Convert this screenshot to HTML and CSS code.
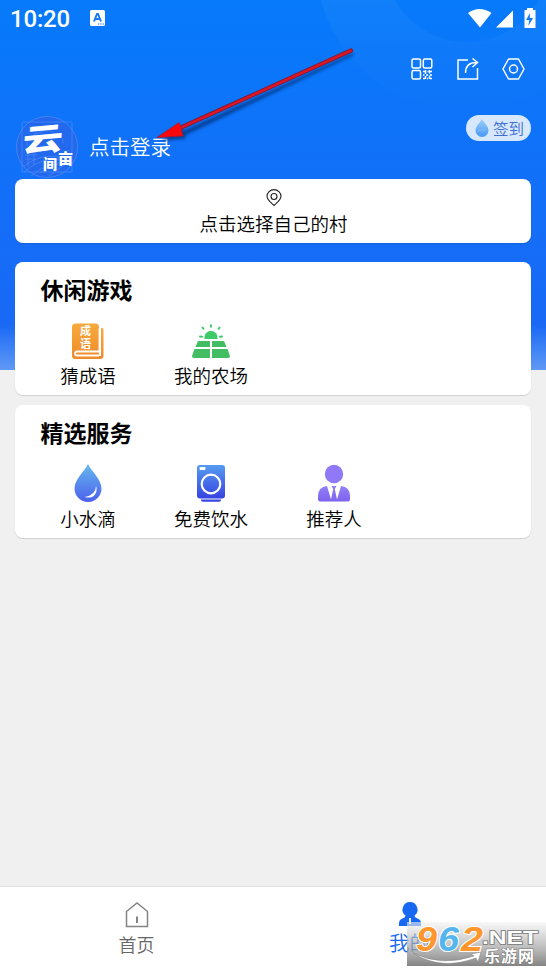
FILE: index.html
```html
<!DOCTYPE html>
<html lang="zh-CN">
<head>
<meta charset="utf-8">
<title>我的</title>
<link rel="stylesheet" href="styles.css">
</head>
<body>
<div class="app">
  <svg class="backdrop" width="546" height="370" viewBox="0 0 546 370">
    <defs><linearGradient id="ring" x1="0" y1="0" x2="0" y2="1"><stop offset=".45" stop-color="#fff" stop-opacity=".065"/><stop offset="1" stop-color="#fff" stop-opacity="0"/></linearGradient></defs>
    <path fill="url(#ring)" fill-rule="evenodd" d="M315-41a152 152 0 1 0 304 0a152 152 0 1 0-304 0zM384-41a83 83 0 1 0 166 0a83 83 0 1 0-166 0z"/>
  </svg>

  <header class="status">
    <span class="clock">10:20</span>
    <svg class="keyboard" width="15" height="17" viewBox="0 0 15 17"><rect width="15" height="16" rx="1.500" fill="#fff"/><path d="M4 11.500 7 4h1l3 7.500M5.200 9h4.600" fill="none" stroke="#1679f6" stroke-width="1.900"/><path d="M8 14h1.300m1 0h1.300m1 0H14" stroke="#1679f6" stroke-width="1.200"/></svg>
    <svg class="signals" width="70" height="21" viewBox="0 0 70 21" fill="#fff">
      <path d="M0 5Q11.500-3 23.500 5L12 19.500z"/><path d="M28 19.500 45 2.500v17z"/><path fill-rule="evenodd" d="M59 0h6v2h2.500v18h-11V2H59zM62 5l-4 7h3.300l-1 6 4.800-8h-3.300z"/>
    </svg>
  </header>

  <nav class="tools">
    <svg width="22" height="22" viewBox="0 0 22 22" fill="none" stroke="#fff" stroke-width="1.500"><rect x="1" y="1" width="8.500" height="9" rx="1.500"/><rect x="12.300" y="1" width="8.500" height="9" rx="1.500"/><rect x="1" y="12.500" width="8.500" height="8.500" rx="1.500"/><path d="M12 13.500h3m1.500 0h1m1.500 0h2M12 17h1.500m1.500 0h2m2 0h2M12 20.500h2m2 0h1m2 0h2M14.500 12v4m0 2v3M18.500 12v3.500m0 2V21"/></svg>
    <svg width="22" height="22" viewBox="0 0 22 22" fill="none" stroke="#fff" stroke-width="1.500"><path d="M11 2H1v19h19.500V10M8.500 15C8.500 8 12 4.500 19.500 4.500M15.500.5l5 4-5 4.500"/></svg>
    <svg width="23" height="22" viewBox="0 0 23 22" fill="none" stroke="#fff" stroke-width="1.500"><path d="M6.500 1h10L22 11l-5.500 10h-10L1 11z" stroke-linejoin="round"/><circle cx="11.500" cy="11" r="4"/></svg>
  </nav>

  <section class="profile">
    <svg class="avatar" width="62" height="62" viewBox="0 0 62 62">
      <circle cx="31" cy="31" r="30.500" fill="#2269ed" stroke="#4383f5"/>
      <g fill="none" stroke="#4f8af6" stroke-width=".7"><path d="M6 6h50v50H6zM11 30q-1-6 5-7 1-7 8-6 7-7 14 1 9-1 9 9M7 51q20-17 48-7M8 56q22-19 47-9M15 60q18-16 38-11M24 57 53 34M33 60 56 43M9 39h12M9 43h11M12 36v15M18 36v13"/></g>
      <g class="avatar-text"><text transform="translate(6 36.500) rotate(-5) skewX(-9) scale(1.120 .86)" font-size="36">云</text><text x="27" y="53" font-size="14">间</text><text x="42" y="47.500" font-size="15">亩</text></g>
    </svg>
    <span class="login">点击登录</span>
    <span class="checkin"><svg width="14" height="18" viewBox="0 0 14 18"><defs><linearGradient id="drop-small" x1="0" y1="0" x2="0" y2="1"><stop stop-color="#9bd0f7"/><stop offset="1" stop-color="#4898f4"/></linearGradient></defs><path fill="url(#drop-small)" d="M7 0c2 4 6.500 7 6.500 11.500a6.500 6.500 0 0 1-13 0C.5 7 5 4 7 0"/><path d="M3 12q3-3 8 0" fill="none" stroke="#84bcf6"/></svg>签到</span>
  </section>

  <main class="cards">
    <section class="card village">
      <svg width="16" height="18" viewBox="0 0 16 18" fill="none" stroke="#222" stroke-width="1.100"><path d="M8 16.500C6 14.500 1 11 1 7.300a7 6.700 0 0 1 14 0C15 11 10 14.500 8 16.500z"/><circle cx="8" cy="7.500" r="3"/></svg>
      <span>点击选择自己的村</span>
    </section>

    <section class="card group">
      <h2>休闲游戏</h2>
      <div class="items">
        <div class="item">
          <svg width="40" height="40" viewBox="0 0 40 40"><defs><linearGradient id="book" x1="0" y1="0" x2="0" y2="1"><stop stop-color="#f7aa3e"/><stop offset="1" stop-color="#f08a2b"/></linearGradient></defs><rect x="4" y="1.500" width="27" height="35.500" rx="3.500" fill="url(#book)"/><path fill="url(#book)" d="M33 6h1q1.500 0 1.500 2v26q0 3-3.500 3H8v-3h25z"/><path d="M31.500 6v24.500M31 29.500H9a2 2 0 0 0 0 4h22" fill="none" stroke="#fff" stroke-width="1.800"/><g class="book-text"><text x="12" y="13" font-size="11">成</text><text x="12" y="26" font-size="11">语</text></g></svg>
          <span>猜成语</span>
        </div>
        <div class="item">
          <svg width="40" height="40" viewBox="0 0 40 40" fill="#3fca68"><path d="M13.500 17a6.600 7 0 1 1 13 0z"/><path d="M20 3.200v1.500M11.500 5.500l1 1.300M28.500 5.500l-1 1.300M9 14.500l2 .2M31 14.500l-2 .2" stroke="#3fca68" stroke-width="2" stroke-linecap="round"/><path fill="#43bd62" d="M8 19h11v6H4.500l2-5q.5-1 1.500-1M21 19h11q1 0 1.500 1l2 5H21zM3.500 27H19v9H3q-2 0-2-2zM21 27h15.500L39 34q0 2-2 2H21z"/></svg>
          <span>我的农场</span>
        </div>
      </div>
    </section>

    <section class="card group services">
      <h2>精选服务</h2>
      <div class="items">
        <div class="item">
          <svg width="40" height="40" viewBox="0 0 40 40"><defs><linearGradient id="water" x1="0" y1="0" x2="0" y2="1"><stop stop-color="#65b8ef"/><stop offset="1" stop-color="#4c60ed"/></linearGradient></defs><path fill="url(#water)" d="M20 1c3 7 13.500 15 13.500 24.500a13.500 13.500 0 0 1-27 0C6.500 16 17 8 20 1"/><path fill="#fff" d="M28 23q0 9-11.500 11 10 2.500 12-6 .5-3-.5-5"/></svg>
          <span>小水滴</span>
        </div>
        <div class="item">
          <svg width="40" height="40" viewBox="0 0 40 40"><defs><linearGradient id="washer" x1="0" y1="0" x2="0" y2="1"><stop stop-color="#559cf0"/><stop offset="1" stop-color="#3743e1"/></linearGradient></defs><rect x="6" y="2" width="28" height="33.500" rx="3" fill="url(#washer)"/><circle cx="20" cy="21" r="9.300" fill="none" stroke="#fff" stroke-width="2.200"/><rect x="8.500" y="4" width="6" height="3" rx="1" fill="#fff"/><path d="M10 36.500h20v.5q0 1.700-2 1.700H12q-2 0-2-1.700z" fill="#3743e1"/></svg>
          <span>免费饮水</span>
        </div>
        <div class="item">
          <svg width="40" height="40" viewBox="0 0 40 40"><defs><linearGradient id="person" x1="0" y1="0" x2="0" y2="1"><stop stop-color="#9480f8"/><stop offset="1" stop-color="#7e62ed"/></linearGradient></defs><circle cx="20" cy="11" r="9.200" fill="#9078f6"/><path fill="url(#person)" d="M13 23 17 36.500 19.200 26 17.500 23h5L20.800 26 23 36.500 27 23q9 1 9 10v3.500q0 2-2 2H6q-2 0-2-2V33q0-9 9-10"/></svg>
          <span>推荐人</span>
        </div>
      </div>
    </section>
  </main>

  <footer class="tabs">
    <div class="tab">
      <svg width="24" height="26" viewBox="0 0 24 26" fill="none" stroke="#858585" stroke-width="1.500"><path d="M1.500 9.500 12 1l10.500 8.500v15h-21z"/><path d="M12 14.500v6.500" stroke-width="2"/></svg>
      <span>首页</span>
    </div>
    <div class="tab active">
      <svg width="24" height="26" viewBox="0 0 24 26"><path fill="#1769f2" d="M12 0a7.500 7.500 0 0 1 4.500 13.500q0 2 3 3 3.500 1.200 3.500 5V24H1v-2.500q0-3.800 3.500-5 3-1 3-3A7.500 7.500 0 0 1 12 0"/><path d="M12 16v6" stroke="#fff" stroke-width="1.800"/></svg>
      <span>我的</span>
    </div>
  </footer>

  <svg class="arrow" width="210" height="110" viewBox="0 0 210 110">
    <defs><filter id="soft" x="-10%" y="-10%" width="120%" height="130%"><feGaussianBlur stdDeviation="1.500"/></filter></defs>
    <path d="M10 96 33 82v4L203 8l1 2L36 90l-1 4z" fill="#052f75" opacity=".7" filter="url(#soft)"/>
    <path d="M201 5.500 30 83" stroke="#80172d" stroke-width="4.200" stroke-linecap="round"/>
    <path d="M201 5.500 30 83" stroke="#d91626" stroke-width="2.600" stroke-linecap="round"/>
    <path d="M7 92.500 29 77.500 31 82.500 33 91z" fill="#f9090c" stroke="#a91428" stroke-width=".7"/>
  </svg>

  <svg class="watermark" width="139" height="44" viewBox="0 0 139 44">
    <defs><linearGradient id="mark" x1="0" y1="0" x2="0" y2="1"><stop stop-color="#f4f4f4" stop-opacity=".6"/><stop offset=".45" stop-color="#b0b0b0" stop-opacity=".65"/><stop offset="1" stop-color="#7d7d7d" stop-opacity=".95"/></linearGradient></defs>
    <rect width="139" height="44" fill="url(#mark)"/>
    <path fill="#fff" stroke="#888" stroke-width=".6" d="M6 31q28 14 61 3l-3-2 10-2-3 10-2-4Q34 49 6 31"/>
    <g class="mark-number"><text x="9" y="28.500" textLength="21" lengthAdjust="spacingAndGlyphs" fill="#ff962e">9</text><text x="31" y="28.500" textLength="21" lengthAdjust="spacingAndGlyphs" fill="#54b5ef">6</text><text x="54" y="28.500" textLength="22" lengthAdjust="spacingAndGlyphs" fill="#ff962e">2</text></g>
    <text class="mark-net" x="75" y="21.500" textLength="56" lengthAdjust="spacingAndGlyphs">.NET</text>
    <text class="mark-cn" x="77" y="40" textLength="50">乐游网</text>
  </svg>
</div>
</body>
</html>
```
FILE: styles.css
```css
* { box-sizing: border-box; }
body {
  margin: 0;
  font-family: "Noto Sans CJK SC", sans-serif;
  font-weight: 350;
  color: #000;
  background: #fff;
}
svg { display: block; flex: none; }
.app {
  position: relative;
  width: 546px;
  height: 972px;
  overflow: hidden;
  display: flex;
  flex-direction: column;
  background: linear-gradient(#067afa 0, #1270f8 180px, #1969f5 325px, #6099f5 370px, #f0f0f0 370px);
}
.backdrop { position: absolute; left: 0; top: 0; }
.status {
  position: relative;
  height: 38px;
  padding: 8px 10px 0;
  display: flex;
  align-items: flex-start;
}
.clock {
  width: 80px;
  color: #fff;
  font: 500 24px/23px Roboto, sans-serif;
  letter-spacing: -.2px;
}
.keyboard { margin-top: 2px; }
.signals { margin-left: auto; margin-right: -2px; }
.tools {
  position: relative;
  height: 64px;
  padding: 20px 21px 0 0;
  display: flex;
  justify-content: flex-end;
  gap: 23.5px;
}
.profile {
  height: 77px;
  padding: 14px 15px 0 16px;
  display: flex;
  align-items: flex-start;
}
.avatar { overflow: visible; }
.avatar-text { fill: #fff; font-weight: 900; }
.book-text { fill: #fff; font-weight: 700; }
.login {
  margin: 15px 0 0 11px;
  color: #fff;
  font-size: 20.5px;
  line-height: 30px;
}
.checkin {
  width: 65px;
  height: 26px;
  margin: -1px 0 0 auto;
  padding-left: 2px;
  border-radius: 13px;
  display: flex;
  align-items: center;
  justify-content: center;
  gap: 4px;
  color: #3d6ed0;
  background: #d7e7fd;
  font-size: 15.5px;
  line-height: 26px;
}
.cards { padding: 0 15px; }
.card {
  border-radius: 8px;
  background: #fff;
  box-shadow: 0 1px 1px #0002;
}
.village {
  height: 64px;
  margin-bottom: 19px;
  padding: 10px 0 0 1px;
  display: flex;
  flex-direction: column;
  align-items: center;
  font-size: 18.5px;
  line-height: 27px;
}
.village span { margin-top: 3px; }
.group { height: 133px; margin-bottom: 10px; padding: 12px 11px 0; }
h2 {
  margin: 0 0 18px 14.5px;
  font-size: 23px;
  line-height: 30px;
  font-weight: 700;
  color: #000;
}
.items { display: flex; }
.item {
  width: 123px;
  padding-left: 1px;
  display: flex;
  flex-direction: column;
  align-items: center;
  font-size: 18.5px;
  line-height: 28px;
}
.item span { margin-top: -1px; }
.services .item span { margin-top: 1px; }
.services h2 { margin-bottom: 16px; }
.tabs {
  height: 86px;
  margin-top: auto;
  border-top: 1px solid #e2e2e2;
  background: #fff;
  display: flex;
}
.tab {
  flex: 1;
  padding-top: 15px;
  display: flex;
  flex-direction: column;
  align-items: center;
  color: #666;
  font-size: 18px;
  line-height: 26px;
}
.tab span { margin-top: 3px; }
.active { color: #1769f2; font-size: 20.5px; }
.active span { margin-top: 1px; }
.arrow { position: absolute; left: 150px; top: 45px; }
.watermark { position: absolute; left: 407px; top: 922px; overflow: visible; }
.mark-number {
  font: italic 900 35px "Liberation Sans", sans-serif;
  stroke: #fff;
  stroke-width: 2px;
  paint-order: stroke;
}
.mark-net {
  font: 700 19px "Liberation Sans", sans-serif;
  fill: #fff;
  stroke: #777;
  stroke-width: 1.5px;
  paint-order: stroke;
}
.mark-cn {
  font-size: 16px;
  font-weight: 700;
  fill: #fff;
  stroke: #777;
  stroke-width: 1px;
  paint-order: stroke;
}
```
